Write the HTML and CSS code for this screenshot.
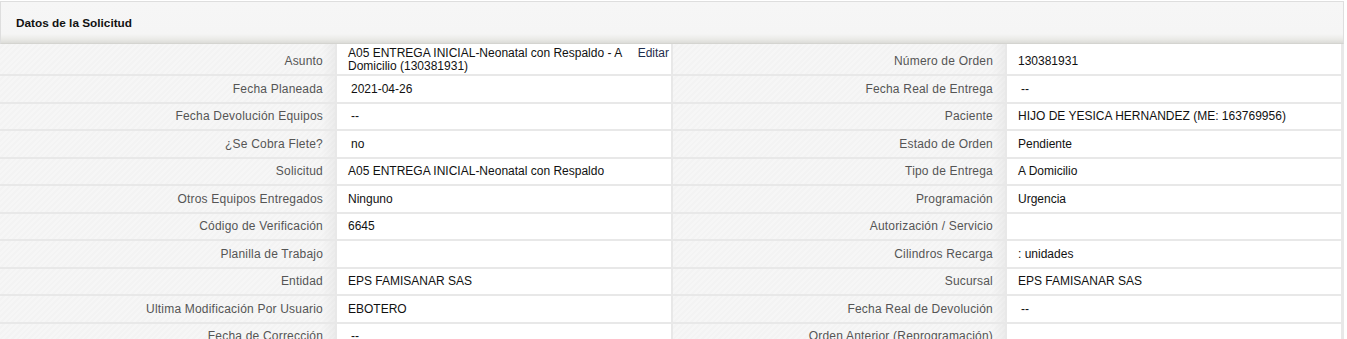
FILE: index.html
```html
<!DOCTYPE html>
<html lang="es">
<head>
    <meta charset="UTF-8">
    <meta name="viewport" content="width=device-width, initial-scale=1.0">
    <title>Datos de la Solicitud</title>
    <link rel="stylesheet" href="styles.css">
</head>
<body>
    <div class="panel">
        <div class="panel-heading">Datos de la Solicitud</div>
        <div class="detail">
            <div class="lbl lbl-low">Asunto</div>
            <div class="val val-top">
                <span class="asunto">A05 ENTREGA INICIAL-Neonatal con Respaldo - A Domicilio (130381931)</span>
                <a class="edit" href="#">Editar</a>
            </div>
            <div class="lbl lbl-low">Número de Orden</div>
            <div class="val val-low">130381931</div>

            <div class="lbl">Fecha Planeada</div>
            <div class="val sp">2021-04-26</div>
            <div class="lbl">Fecha Real de Entrega</div>
            <div class="val sp">--</div>

            <div class="lbl">Fecha Devolución Equipos</div>
            <div class="val sp">--</div>
            <div class="lbl">Paciente</div>
            <div class="val">HIJO DE YESICA HERNANDEZ (ME: 163769956)</div>

            <div class="lbl">¿Se Cobra Flete?</div>
            <div class="val sp">no</div>
            <div class="lbl">Estado de Orden</div>
            <div class="val">Pendiente</div>

            <div class="lbl">Solicitud</div>
            <div class="val">A05 ENTREGA INICIAL-Neonatal con Respaldo</div>
            <div class="lbl">Tipo de Entrega</div>
            <div class="val">A Domicilio</div>

            <div class="lbl">Otros Equipos Entregados</div>
            <div class="val">Ninguno</div>
            <div class="lbl">Programación</div>
            <div class="val">Urgencia</div>

            <div class="lbl">Código de Verificación</div>
            <div class="val">6645</div>
            <div class="lbl">Autorización / Servicio</div>
            <div class="val"></div>

            <div class="lbl">Planilla de Trabajo</div>
            <div class="val"></div>
            <div class="lbl">Cilindros Recarga</div>
            <div class="val">: unidades</div>

            <div class="lbl">Entidad</div>
            <div class="val">EPS FAMISANAR SAS</div>
            <div class="lbl">Sucursal</div>
            <div class="val">EPS FAMISANAR SAS</div>

            <div class="lbl">Ultima Modificación Por Usuario</div>
            <div class="val">EBOTERO</div>
            <div class="lbl">Fecha Real de Devolución</div>
            <div class="val sp">--</div>

            <div class="lbl">Fecha de Corrección</div>
            <div class="val sp">--</div>
            <div class="lbl">Orden Anterior (Reprogramación)</div>
            <div class="val"></div>
        </div>
    </div>
</body>
</html>
```

FILE: styles.css
```css
body {
    margin: 0;
    padding-top: 1px;
    font-family: "Liberation Sans", Arial, sans-serif;
    font-size: 12px;
    color: #111;
    background: #fff;
}
.panel {
    width: 1344px;
}
.panel-heading {
    height: 41px;
    line-height: 42px;
    padding-left: 15px;
    font-size: 11.8px;
    font-weight: bold;
    color: #111;
    border: 1px solid #dedede;
    border-bottom: 1px solid #d4d4d0;
    background: linear-gradient(#f6f6f6 0%, #f5f5f5 78%, #ebebe8 90%, #dcdcd8 100%);
}
.detail {
    display: grid;
    grid-template-columns: 335px 334px 332px 334px;
    grid-auto-rows: minmax(25.5px, auto);
    gap: 2px;
    padding: 0 2px 2px 0;
    background: #e8e8e8;
}
.lbl {
    display: flex;
    align-items: center;
    justify-content: flex-end;
    padding-right: 12px;
    color: #555;
    letter-spacing: 0.2px;
    background:
        linear-gradient(to right, rgba(0,0,0,0) 96%, rgba(0,0,0,0.04) 100%),
        repeating-linear-gradient(135deg, #f6f6f6 0 2px, #f3f3f3 2px 4px);
}
.lbl-low, .val-low {
    padding-top: 3px;
}
.val {
    display: flex;
    align-items: center;
    padding-left: 11px;
    background: #fff;
}
.val.sp {
    padding-left: 14px;
}
.val-top {
    align-items: flex-start;
    justify-content: space-between;
    padding-top: 3px;
    padding-bottom: 1px;
    padding-right: 2px;
    min-height: 25px;
}
.asunto {
    width: 285px;
    line-height: 13px;
}
.edit {
    color: #1f2d4d;
    text-decoration: none;
    line-height: 13px;
}
```
